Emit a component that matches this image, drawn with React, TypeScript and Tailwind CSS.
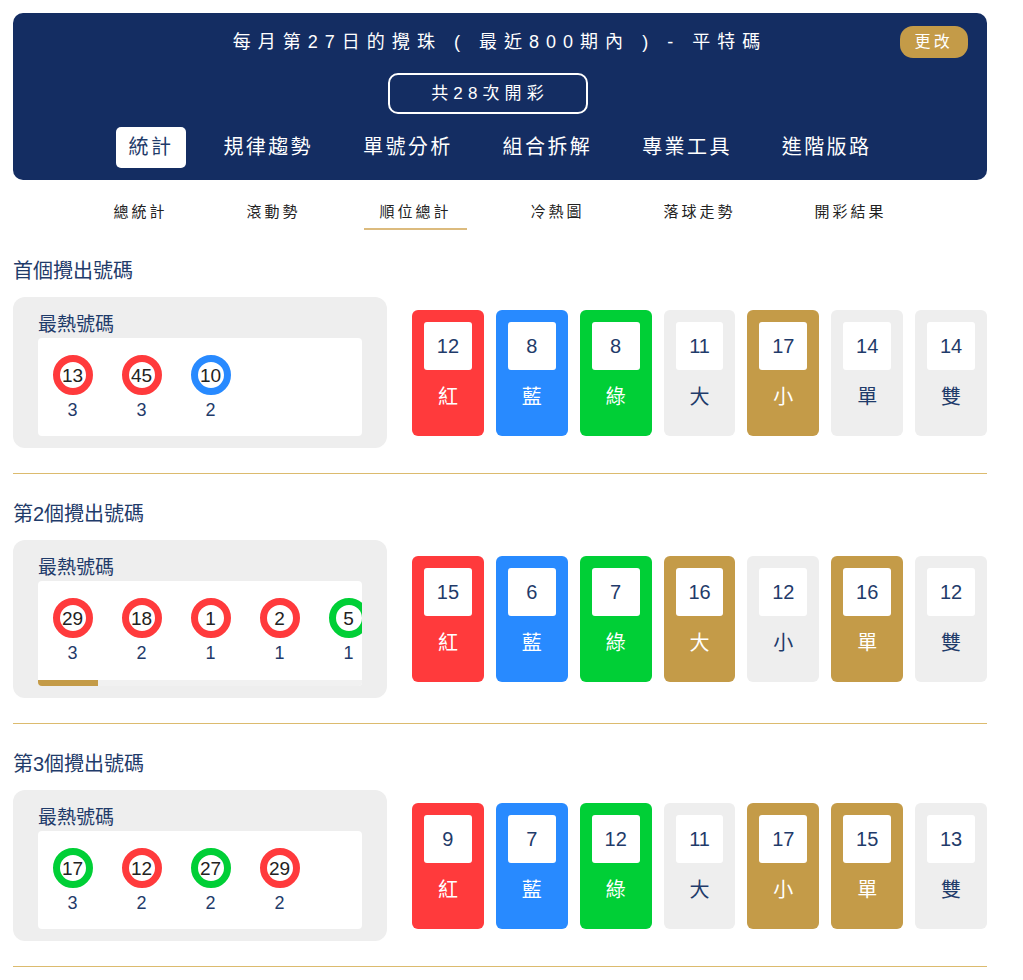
import React from 'react'

type Tone = 'red' | 'blue' | 'green' | 'gray' | 'gold'

const font = { fontFamily: '"Liberation Sans", "Noto Sans CJK TC", sans-serif' }

const cardTone: Record<Tone, string> = {
  red: 'bg-[#ff3a3c] text-white',
  blue: 'bg-[#288aff] text-white',
  green: 'bg-[#00cf36] text-white',
  gray: 'bg-[#eeeeee] text-[#1f3b6a]',
  gold: 'bg-[#c49b48] text-white',
}

const ringTone: Record<string, string> = {
  red: 'border-[#ff3a3c]',
  blue: 'border-[#288aff]',
  green: 'border-[#00cf36]',
}

type Ball = { n: number; c: 'red' | 'blue' | 'green'; k: number }
type Card = { label: string; v: number; t: Tone }

const sections: { title: string; balls: Ball[]; cards: Card[]; scroll?: boolean }[] = [
  {
    title: '首個攪出號碼',
    balls: [
      { n: 13, c: 'red', k: 3 },
      { n: 45, c: 'red', k: 3 },
      { n: 10, c: 'blue', k: 2 },
    ],
    cards: [
      { label: '紅', v: 12, t: 'red' },
      { label: '藍', v: 8, t: 'blue' },
      { label: '綠', v: 8, t: 'green' },
      { label: '大', v: 11, t: 'gray' },
      { label: '小', v: 17, t: 'gold' },
      { label: '單', v: 14, t: 'gray' },
      { label: '雙', v: 14, t: 'gray' },
    ],
  },
  {
    title: '第2個攪出號碼',
    scroll: true,
    balls: [
      { n: 29, c: 'red', k: 3 },
      { n: 18, c: 'red', k: 2 },
      { n: 1, c: 'red', k: 1 },
      { n: 2, c: 'red', k: 1 },
      { n: 5, c: 'green', k: 1 },
    ],
    cards: [
      { label: '紅', v: 15, t: 'red' },
      { label: '藍', v: 6, t: 'blue' },
      { label: '綠', v: 7, t: 'green' },
      { label: '大', v: 16, t: 'gold' },
      { label: '小', v: 12, t: 'gray' },
      { label: '單', v: 16, t: 'gold' },
      { label: '雙', v: 12, t: 'gray' },
    ],
  },
  {
    title: '第3個攪出號碼',
    balls: [
      { n: 17, c: 'green', k: 3 },
      { n: 12, c: 'red', k: 2 },
      { n: 27, c: 'green', k: 2 },
      { n: 29, c: 'red', k: 2 },
    ],
    cards: [
      { label: '紅', v: 9, t: 'red' },
      { label: '藍', v: 7, t: 'blue' },
      { label: '綠', v: 12, t: 'green' },
      { label: '大', v: 11, t: 'gray' },
      { label: '小', v: 17, t: 'gold' },
      { label: '單', v: 15, t: 'gold' },
      { label: '雙', v: 13, t: 'gray' },
    ],
  },
]

const mainTabs = ['統計', '規律趨勢', '單號分析', '組合拆解', '專業工具', '進階版路']
const subTabs = ['總統計', '滾動勢', '順位總計', '冷熱圖', '落球走勢', '開彩結果']

function Section({ s }: { s: (typeof sections)[number] }) {
  return (
    <div className="pt-[26px]">
      <div className="text-[20px] leading-[28px] text-[#1f3b6a]">{s.title}</div>
      <div className="mt-[12px] flex items-center gap-[25px]">
        {/* hot numbers */}
        <div className="w-[374px] shrink-0 rounded-[12px] bg-[#eeeeee] pt-[16px] pr-[25px] pb-[12px] pl-[25px]">
          <div className="text-[19px] leading-[24px] text-[#1f3b6a]">最熱號碼</div>
          <div className="mt-[1px] overflow-hidden rounded-[4px] bg-white">
            <div className={`flex pt-[17px] ${s.scroll ? 'pb-[16px]' : 'pb-[15px]'}`}>
              {s.balls.map((b, i) => (
                <div key={i} className="flex w-[69px] shrink-0 flex-col items-center">
                  <div
                    className={`flex h-10 w-10 items-center justify-center rounded-full border-[7px] bg-white text-[19px] leading-none text-[#222] ${ringTone[b.c]}`}
                  >
                    {b.n}
                  </div>
                  <div className="mt-[4px] text-[18px] leading-[22px] text-[#1f3b6a]">{b.k}</div>
                </div>
              ))}
            </div>
            {s.scroll && (
              <div className="h-[6px] bg-[#f1f1f1]">
                <div className="h-full w-[60px] bg-[#c49b48]" />
              </div>
            )}
          </div>
        </div>

        {/* counts */}
        <div className="flex flex-1 gap-3">
          {s.cards.map((c) => (
            <div
              key={c.label}
              className={`flex h-[126px] flex-1 flex-col items-center rounded-[6px] px-[12px] pt-[12px] ${cardTone[c.t]}`}
            >
              <div className="flex h-[48px] w-full items-center justify-center rounded-[3px] bg-white text-[20px] text-[#1f3b6a]">
                {c.v}
              </div>
              <div className="mt-[16px] text-[20px] leading-[22px]">{c.label}</div>
            </div>
          ))}
        </div>
      </div>
      <div className="mt-[25px] h-px bg-[#dcbb6e]" />
    </div>
  )
}

export default function App() {
  return (
    <div className="min-h-screen bg-white" style={font}>
      <div className="ml-[13px] w-[974px] pt-[13px]">
        {/* header */}
        <div className="rounded-[10px] bg-[#142d62] pt-[13px] pb-[12px] text-white">
          <div className="grid grid-cols-[1fr_auto_1fr] items-center">
            <div />
            <div className="text-[18px] leading-[30px] tracking-[0.39em]">
              每月第27日的攪珠 ( 最近800期內 ) - 平特碼
            </div>
            <div className="justify-self-end pr-[19px]">
              <button className="h-[32px] rounded-[13px] bg-[#c49b48] px-[15px] text-[16px] tracking-[0.2em] text-white">
                更改
              </button>
            </div>
          </div>
          <div className="mt-[15px] flex justify-center pr-[25px]">
            <div className="flex h-[41px] w-[200px] items-center justify-center rounded-[10px] border-2 border-white pl-[5px] text-[17px] tracking-[0.3em]">
              共28次開彩
            </div>
          </div>
          <div className="mt-[13px] flex justify-center gap-6">
            {mainTabs.map((t, i) => (
              <div
                key={t}
                className={`rounded-[5px] px-[13px] text-[20px] leading-[41px] tracking-[0.12em] ${
                  i === 0 ? 'bg-white text-[#1f3b6a]' : 'text-white'
                }`}
              >
                {t}
              </div>
            ))}
          </div>
        </div>

        {/* sub tabs */}
        <div className="mt-[19px] flex justify-center gap-[49px]">
          {subTabs.map((t) => (
            <div
              key={t}
              className={`border-b-2 px-[15px] pt-[2px] pb-[5px] text-[15px] leading-[22px] tracking-[0.2em] text-[#222] ${
                t === '順位總計' ? 'border-[#dcbb7e]' : 'border-transparent'
              }`}
            >
              {t}
            </div>
          ))}
        </div>

        <div className="pt-[1px]">
          {sections.map((s) => (
            <Section key={s.title} s={s} />
          ))}
        </div>
      </div>
    </div>
  )
}
